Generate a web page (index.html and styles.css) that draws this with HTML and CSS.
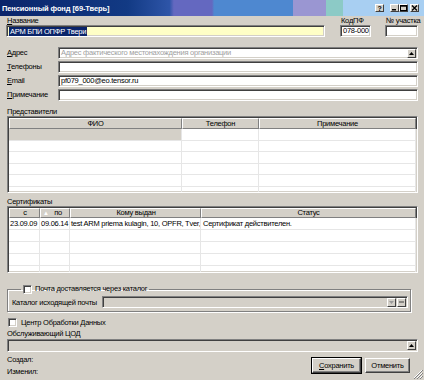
FILE: index.html
```html
<!DOCTYPE html>
<html lang="ru">
<head>
<meta charset="utf-8">
<title>Пенсионный фонд</title>
<link rel="stylesheet" href="styles.css">
</head>
<body>
<div class="win">
  <div class="titlebar">
    <span class="title">Пенсионный фонд [69-Тверь]</span>
    <div class="tbtns">
      <span class="tb help">?</span>
      <span class="tb min"><svg width="7" height="6" viewBox="0 0 7 6"><rect x="1" y="4" width="4" height="1.5" fill="#000"/></svg></span>
      <span class="tb max"><svg width="7" height="6" viewBox="0 0 7 6"><rect x="0.5" y="0.5" width="6" height="5" fill="none" stroke="#000"/><rect x="0.5" y="0.5" width="6" height="1.2" fill="#000"/></svg></span>
      <span class="tb close"><svg width="7" height="6" viewBox="0 0 7 6"><path d="M1 0.5 L6 5.5 M6 0.5 L1 5.5" stroke="#000" stroke-width="1.3"/></svg></span>
    </div>
  </div>

  <div class="content">
    <div class="top">
      <div class="lbl"><u>Н</u>азвание</div>
      <div></div>
      <div class="lbl">КодПФ</div>
      <div></div>
      <div class="lbl">№ участка</div>
      <div class="field yellow"><span class="sel">АРМ БПИ ОПФР Твери</span></div>
      <div></div>
      <div class="field">078-000</div>
      <div></div>
      <div class="field"></div>
    </div>

    <div class="form">
      <div class="row">
        <div class="rlbl"><u>А</u>дрес</div>
        <div class="field combo"><span class="ph">Адрес фактического местонахождения организации</span><span class="mini up"><svg width="5" height="3" viewBox="0 0 5 3"><path d="M0 3 L2.5 0 L5 3Z" fill="#000"/></svg></span></div>
      </div>
      <div class="row">
        <div class="rlbl"><u>Т</u>елефоны</div>
        <div class="field"></div>
      </div>
      <div class="row">
        <div class="rlbl"><u>E</u>mail</div>
        <div class="field">pf079_000@eo.tensor.ru</div>
      </div>
      <div class="row">
        <div class="rlbl"><u>П</u>римечание</div>
        <div class="field"></div>
      </div>
    </div>

    <div class="slbl reps-lbl">Представители</div>
    <div class="grid reps">
      <div class="ghead">
        <div class="hc c-fio">ФИО</div>
        <div class="hc c-tel">Телефон</div>
        <div class="hc c-note">Примечание</div>
      </div>
      <div class="grow"><div class="gc c-fio selcell"></div><div class="gc c-tel"></div><div class="gc c-note"></div></div>
      <div class="grow"><div class="gc c-fio"></div><div class="gc c-tel"></div><div class="gc c-note"></div></div>
      <div class="grow"><div class="gc c-fio"></div><div class="gc c-tel"></div><div class="gc c-note"></div></div>
      <div class="grow"><div class="gc c-fio"></div><div class="gc c-tel"></div><div class="gc c-note"></div></div>
      <div class="grow"><div class="gc c-fio"></div><div class="gc c-tel"></div><div class="gc c-note"></div></div>
      <div class="grow"><div class="gc c-fio"></div><div class="gc c-tel"></div><div class="gc c-note"></div></div>
    </div>

    <div class="slbl certs-lbl">Сертификаты</div>
    <div class="grid certs">
      <div class="ghead">
        <div class="hc c-from">с</div>
        <div class="hc c-to"><span class="sort">▲</span>по</div>
        <div class="hc c-who">Кому выдан</div>
        <div class="hc c-st">Статус</div>
      </div>
      <div class="grow"><div class="gc c-from">23.09.09</div><div class="gc c-to">09.06.14</div><div class="gc c-who">test ARM priema kulagin, 10, OPFR, Tver,</div><div class="gc c-st">Сертификат действителен.</div></div>
      <div class="grow"><div class="gc c-from"></div><div class="gc c-to"></div><div class="gc c-who"></div><div class="gc c-st"></div></div>
      <div class="grow"><div class="gc c-from"></div><div class="gc c-to"></div><div class="gc c-who"></div><div class="gc c-st"></div></div>
      <div class="grow"><div class="gc c-from"></div><div class="gc c-to"></div><div class="gc c-who"></div><div class="gc c-st"></div></div>
      <div class="grow"><div class="gc c-from"></div><div class="gc c-to"></div><div class="gc c-who"></div><div class="gc c-st"></div></div>
    </div>

    <fieldset class="group">
      <legend class="legend"><span class="chk"></span>Почта доставляется через каталог</legend>
      <div class="grouprow">
        <div class="glbl">Каталог исходящей почты</div>
        <div class="field combo disabled">
          <span class="mini dis"><svg width="5" height="3" viewBox="0 0 5 3"><path d="M0 0 L2.5 3 L5 0Z" fill="#9a9a9a"/></svg></span>
          <span class="mini dots"><svg width="5" height="2" viewBox="0 0 5 2"><rect x="0" y="0.5" width="5" height="1" fill="#404040"/></svg></span>
        </div>
      </div>
    </fieldset>

    <div class="chkrow"><span class="chk"></span>Центр Обработки Данных</div>
    <div class="slbl cod-lbl">Обслуживающий ЦОД</div>
    <div class="field combo disabled cod">
      <span class="mini up"><svg width="5" height="3" viewBox="0 0 5 3"><path d="M0 3 L2.5 0 L5 3Z" fill="#000"/></svg></span>
    </div>

    <div class="footer">
      <div class="meta">
        <div>Создал:</div>
        <div>Изменил:</div>
      </div>
      <div class="btns">
        <button class="btn default"><u>С</u>охранить</button>
        <button class="btn">Отменить</button>
      </div>
    </div>
  </div>
  <div class="grip"><svg width="10" height="10" viewBox="0 0 10 10"><path d="M9 1 L1 9 M9 4 L4 9 M9 7 L7 9" stroke="#fff" stroke-width="1"/><path d="M10 1 L1 10 M10 4 L4 10 M10 7 L7 10" stroke="#808080" stroke-width="1"/></svg></div>
</div>
</body>
</html>
```

FILE: styles.css
```css
* { box-sizing: border-box; }
html, body { margin: 0; padding: 0; }
body {
  background: #d4d0c8;
  font-family: "Liberation Sans", Arial, sans-serif;
  font-size: 7.5px;
  letter-spacing: -0.25px;
  color: #000;
}
u { text-decoration: underline; }

.win {
  width: 424px;
  height: 380px;
  position: relative;
  overflow: hidden;
  background: #d4d0c8;
  display: flex;
  flex-direction: column;
}

.titlebar {
  height: 16px;
  flex: none;
  display: flex;
  align-items: center;
  padding: 0 5px 0 2px;
  background: linear-gradient(90deg,
    #0a246a 0%, #123a84 30%, #2e55a8 40%,
    #6468c0 41%, #6468c0 50%, #4e88d0 50.5%, #4e88d0 69%,
    #9a96d2 69%, #9a96d2 77%, #8ccac6 77%, #8ccac6 81%,
    #a8cff2 81%, #a8cff2 100%);
}
.title {
  flex: 1;
  color: #fff;
  font-weight: bold;
  font-size: 7.5px;
  letter-spacing: -0.1px;
  white-space: nowrap;
}
.tbtns { display: flex; align-items: center; }
.tb {
  width: 9px;
  height: 8px;
  background: #d4d0c8;
  border: 1px solid;
  border-color: #fff #404040 #404040 #fff;
  display: flex;
  align-items: center;
  justify-content: center;
  font-size: 7px;
  font-weight: bold;
  line-height: 1;
}
.tb.help { margin-right: 6px; }
.tb.close { margin-left: 2px; }

.content {
  flex: 1;
  display: flex;
  flex-direction: column;
  padding: 1px 6px 0 6px;
}

/* sunken field */
.field {
  height: 12px;
  background: #fff;
  border: 1px solid;
  border-color: #808080 #fff #fff #808080;
  box-shadow: inset 1px 1px 0 #404040, inset -1px -1px 0 #d4d0c8;
  padding: 0 2px;
  line-height: 10px;
  white-space: nowrap;
  overflow: hidden;
  display: flex;
  align-items: center;
}
.field.yellow { background: #ffffc6; padding-left: 2px; }
.sel { background: #0a246a; color: #fff; line-height: 9px; padding: 0 1px; }

.top {
  display: grid;
  grid-template-columns: 319px 15px 31px 14px 33px;
  grid-template-rows: 8px 12px;
}
.lbl { line-height: 8px; white-space: nowrap; padding-left: 1px; }

.form {
  margin-top: 10px;
  display: flex;
  flex-direction: column;
  gap: 2px;
}
.row {
  display: grid;
  grid-template-columns: 52px 1fr;
  height: 12px;
  align-items: center;
}
.rlbl { padding-left: 1px; line-height: 10px; }

.combo { justify-content: space-between; padding-right: 1px; }
.ph { color: #a0a0a0; }
.mini {
  width: 9px;
  height: 9px;
  flex: none;
  background: #d4d0c8;
  border: 1px solid;
  border-color: #fff #404040 #404040 #fff;
  display: flex;
  align-items: center;
  justify-content: center;
}
.mini.up { margin-left: auto; }
.field.disabled { background: #d4d0c8; }
.field.disabled .mini.dis { margin-left: auto; }
.field.disabled .mini.dots { margin-left: 1px; }

.slbl { line-height: 9px; height: 9px; white-space: nowrap; }
.reps-lbl { margin-top: 6px; padding-left: 1px; }
.certs-lbl { margin-top: 4px; padding-left: 1px; }

.grid {
  margin-left: 1px;
  background: #fff;
  border: 1px solid;
  border-color: #808080 #fff #fff #808080;
  box-shadow: inset 1px 1px 0 #404040, inset -1px -1px 0 #d4d0c8;
  overflow: hidden;
  padding: 1px;
}
.reps { height: 77px; }
.certs { height: 67px; }

.ghead { display: flex; }
.hc {
  background: #d4d0c8;
  border: 1px solid;
  border-color: #fff #808080 #808080 #fff;
  box-shadow: 1px 0 0 #404040;
  text-align: center;
  white-space: nowrap;
  overflow: hidden;
  position: relative;
}
.reps .hc { height: 11px; line-height: 9px; }
.certs .hc { height: 10px; line-height: 8px; }
.grow { display: flex; }
.reps .grow { height: 11.6px; }
.certs .grow { height: 12px; }
.gc {
  border-right: 1px solid #e6e6e6;
  border-bottom: 1px solid #e6e6e6;
  white-space: nowrap;
  overflow: hidden;
  line-height: 11px;
  padding-left: 2px;
}
.selcell { background: #d4d0c8; }

.c-fio { width: 173px; flex: none; }
.c-tel { width: 77px; flex: none; }
.c-note { flex: 1; }

.c-from { width: 31px; flex: none; padding-left: 1px; }
.c-to { width: 30px; flex: none; padding-left: 1px; }
.c-who { width: 131px; flex: none; padding-left: 1px; }
.c-st { flex: 1; }
.hc.c-to { text-align: right; padding-right: 7px; }
.sort { position: absolute; left: 2px; top: 0; color: #fff; font-size: 6px; }

.group {
  margin: 11px 7px 0 1px;
  padding: 2px 2px 3px 4px;
  border: 1px solid #808080;
  box-shadow: inset 1px 1px 0 #fff, 1px 1px 0 #fff;
  min-width: 0;
}
.legend {
  margin-left: 9px;
  padding: 0 2px;
  display: flex;
  align-items: center;
  gap: 3px;
  line-height: 10px;
}
.chk {
  width: 9px;
  height: 9px;
  flex: none;
  background: #fff;
  border: 1px solid;
  border-color: #808080 #fff #fff #808080;
  box-shadow: inset 1px 1px 0 #404040, inset -1px -1px 0 #d4d0c8;
}
.grouprow {
  display: flex;
  align-items: center;
  gap: 2px;
}
.glbl { white-space: nowrap; width: 88px; flex: none; }
.grouprow .field { flex: 1; }

.chkrow {
  margin-top: 6px;
  display: flex;
  align-items: center;
  gap: 4px;
  height: 9px;
  padding-left: 2px;
}
.cod-lbl { margin-top: 2px; padding-left: 1px; }
.field.cod { margin-left: 1px; margin-top: 1px; height: 13px; }

.footer {
  margin-top: 3px;
  display: flex;
  justify-content: space-between;
}
.meta { display: flex; flex-direction: column; gap: 3px; padding-left: 1px; line-height: 9px; padding-top: 0; }
.btns { display: flex; gap: 4px; margin-top: 3px; margin-right: 8px; }
.btn {
  font-family: "Liberation Sans", Arial, sans-serif;
  font-size: 7.5px;
  letter-spacing: -0.25px;
  height: 15px;
  padding: 0;
  background: #d4d0c8;
  border: 1px solid;
  border-color: #fff #404040 #404040 #fff;
  box-shadow: inset -1px -1px 0 #808080;
  color: #000;
}
.btn.default { width: 49px; outline: 1px solid #000; }
.btn:not(.default) { width: 45px; }

.grip { position: absolute; right: 1px; bottom: 1px; width: 10px; height: 10px; }
```
